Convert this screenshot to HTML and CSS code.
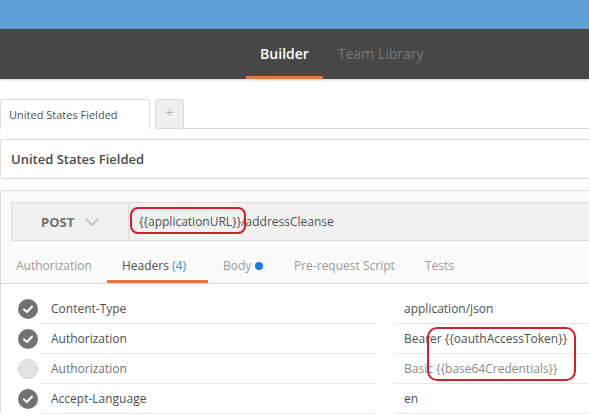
FILE: index.html
```html
<!DOCTYPE html>
<html>
<head>
<meta charset="utf-8">
<link rel="stylesheet" href="styles.css">
</head>
<body>
<div class="topbar"></div>
<nav class="nav">
  <div class="nav-item active">Builder</div>
  <div class="nav-item">Team Library</div>
</nav>
<div class="tabs">
  <div class="tab">United States Fielded</div>
  <div class="tab-add">+</div>
  <div class="tab-fill"></div>
</div>
<div class="namebox">United States Fielded</div>
<div class="request">
  <div class="urlbar">
    <div class="method">POST
      <svg class="chev" width="14" height="8" viewBox="0 0 14 8"><polyline points="1,1 7,7 13,1" fill="none" stroke="#b5b5b5" stroke-width="1.5"/></svg>
    </div>
    <div class="url">{{applicationURL}}/addressCleanse</div>
  </div>
  <div class="reqtabs">
    <div class="reqtab t-auth">Authorization</div>
    <div class="reqtab t-head active">Headers <span class="count">(4)</span></div>
    <div class="reqtab t-body">Body <span class="dot"></span></div>
    <div class="reqtab t-pre">Pre-request Script</div>
    <div class="reqtab t-tests">Tests</div>
  </div>
  <div class="rows">
    <div class="row">
      <span class="check on"><svg width="20" height="20" viewBox="0 0 20 20"><polyline points="6,10.5 9,13 14,7.5" fill="none" stroke="#fff" stroke-width="2" stroke-linecap="round" stroke-linejoin="round"/></svg></span>
      <div class="key">Content-Type</div>
      <div class="val">application/json</div>
    </div>
    <div class="row">
      <span class="check on"><svg width="20" height="20" viewBox="0 0 20 20"><polyline points="6,10.5 9,13 14,7.5" fill="none" stroke="#fff" stroke-width="2" stroke-linecap="round" stroke-linejoin="round"/></svg></span>
      <div class="key">Authorization</div>
      <div class="val">Bearer {{oauthAccessToken}}</div>
    </div>
    <div class="row off">
      <span class="check"></span>
      <div class="key">Authorization</div>
      <div class="val">Basic {{base64Credentials}}</div>
    </div>
    <div class="row">
      <span class="check on"><svg width="20" height="20" viewBox="0 0 20 20"><polyline points="6,10.5 9,13 14,7.5" fill="none" stroke="#fff" stroke-width="2" stroke-linecap="round" stroke-linejoin="round"/></svg></span>
      <div class="key">Accept-Language</div>
      <div class="val">en</div>
    </div>
  </div>
</div>
<div class="mark mark-url"></div>
<div class="mark mark-vals"></div>
</body>
</html>
```
FILE: styles.css
```css
* { box-sizing: border-box; }
html, body { margin: 0; padding: 0; background: #fff; overflow: hidden; }
body {
  font-family: "Open Sans", "Noto Sans", sans-serif;
  color: #505050;
  width: 589px;
  height: 414px;
  position: relative;
}
.topbar { height: 29px; background: #5f9ed6; }
.nav {
  height: 50px;
  background: #474747;
  display: flex;
  padding-left: 246px;
  box-shadow: 0 1px 2px rgba(0,0,0,0.18);
}
.nav-item {
  font-size: 14px;
  color: #777;
  line-height: 50px;
  padding: 0 15px;
}
.nav-item.active {
  color: #fff;
  font-weight: 600;
  width: 77px;
  padding: 0;
  text-align: center;
  border-bottom: 3px solid #e8773b;
  height: 50px;
}
.tabs {
  margin-top: 20px;
  display: flex;
  align-items: flex-end;
  height: 30px;
}
.tab {
  width: 150px;
  height: 30px;
  border: 1px solid #dcdcdc;
  border-bottom: none;
  border-radius: 3px 3px 0 0;
  font-size: 11px;
  line-height: 30px;
  padding-left: 8px;
  color: #505050;
  background: #fff;
}
.tab-add {
  width: 29px;
  height: 30px;
  margin-left: 5px;
  background: #efefef;
  border: 1px solid #dcdcdc;
  border-radius: 3px 3px 0 0;
  color: #b0b0b0;
  font-size: 14px;
  text-align: center;
  line-height: 26px;
}
.tab-fill { flex: 1; height: 30px; border-bottom: 1px solid #dcdcdc; }
.namebox {
  margin-top: 10px;
  margin-right: -10px;
  height: 40px;
  border: 1px solid #dcdcdc;
  border-radius: 3px;
  font-size: 13px;
  font-weight: 600;
  line-height: 38px;
  padding-left: 10px;
  color: #4a4a4a;
}
.request {
  margin-top: 11px;
  margin-right: -10px;
  border: 1px solid #dcdcdc;
  border-radius: 3px;
  background: #fafafa;
  padding-top: 11px;
}
.urlbar {
  margin-left: 10px;
  height: 39px;
  border: 1px solid #dcdcdc;
  border-right: none;
  background: #f0f0f0;
  display: flex;
}
.method {
  width: 117px;
  border-right: 1px solid #dcdcdc;
  font-size: 13px;
  font-weight: 700;
  color: #707070;
  display: flex;
  align-items: center;
  padding-left: 29px;
}
.chev { margin-left: 11px; }
.url {
  font-size: 12px;
  line-height: 37px;
  padding-left: 10px;
  color: #505050;
}
.reqtabs {
  display: flex;
  height: 43px;
  border-bottom: 1px solid #dcdcdc;
  padding-left: 0;
}
.reqtab {
  font-size: 12px;
  color: #9a9a9a;
  padding: 10px 0 0 15px;
  line-height: 30px;
  white-space: nowrap;
  flex: none;
}
.t-auth { width: 106px; }
.t-head { width: 101px; }
.t-body { width: 71px; }
.t-pre { width: 131px; }
.reqtab.active {
  color: #505050;
  border-bottom: 3px solid #e8773b;
}
.count { color: #3f8fd2; }
.dot {
  display: inline-block;
  width: 8px; height: 8px;
  border-radius: 50%;
  background: #1e78e6;
  margin-left: 1px;
  vertical-align: 0px;
}
.rows { background: #fff; padding-top: 10px; }
.row {
  height: 30px;
  display: flex;
  align-items: center;
  font-size: 12px;
}
.check {
  width: 20px; height: 20px;
  border-radius: 50%;
  margin-left: 17px;
  background: #e3e3e3;
  border: 1px solid #cfcfcf;
  flex: none;
}
.check.on { background: #727272; border: none; }
.check svg { display: block; }
.key {
  margin-left: 3px;
  width: 334px;
  height: 30px;
  line-height: 29px;
  padding-left: 10px;
  border-bottom: 1px solid #e6e6e6;
  color: #505050;
}
.val {
  margin-left: 19px;
  flex: 1;
  height: 30px;
  line-height: 29px;
  padding-left: 10px;
  border-bottom: 1px solid #e6e6e6;
  color: #505050;
}
.row.off .key { color: #707070; }
.row.off .val { color: #8a8a8a; }
.mark {
  position: absolute;
  border: 2.5px solid #d01f2d;
  border-radius: 8px;
}
.mark-url { left: 130px; top: 207px; width: 116px; height: 27px; }
.mark-vals { left: 427px; top: 327px; width: 149px; height: 54px; border-radius: 10px; }
```
